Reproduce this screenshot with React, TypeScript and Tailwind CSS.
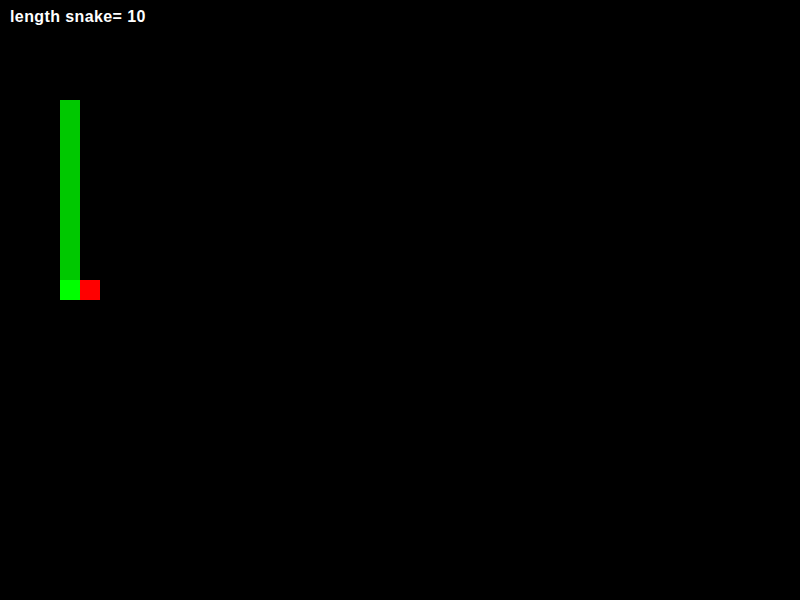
const CELL = 20;

const body = [5, 6, 7, 8, 9, 10, 11, 12, 13].map((row) => ({ col: 3, row }));
const head = { col: 3, row: 14 };
const food = { col: 4, row: 14 };

const Cell = ({ col, row, className }: { col: number; row: number; className: string }) => (
  <div
    className={`absolute w-[20px] h-[20px] ${className}`}
    style={{ left: col * CELL, top: row * CELL }}
  />
);

export default function App() {
  return (
    <div className="relative w-[800px] h-[600px] bg-black overflow-hidden">
      <div className="pl-[10px] pt-[7px] text-white font-bold text-[16px] leading-[20px] tracking-[0.4px] font-['Liberation_Sans',Arial,sans-serif]">
        length snake= 10
      </div>
      {body.map((seg, i) => (
        <Cell key={i} col={seg.col} row={seg.row} className="bg-[#00c800]" />
      ))}
      <Cell col={head.col} row={head.row} className="bg-[#00ff00]" />
      <Cell col={food.col} row={food.row} className="bg-[#ff0000]" />
    </div>
  );
}
